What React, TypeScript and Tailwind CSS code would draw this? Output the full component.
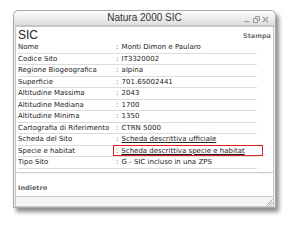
import React from "react";

const rows: { label: string; value: string; link?: boolean; boxed?: boolean }[] = [
  { label: "Nome", value: "Monti Dimon e Paularo" },
  { label: "Codice Sito", value: "IT3320002" },
  { label: "Regione Biogeografica", value: "alpina" },
  { label: "Superficie", value: "701.65002441" },
  { label: "Altitudine Massima", value: "2043" },
  { label: "Altitudine Mediana", value: "1700" },
  { label: "Altitudine Minima", value: "1350" },
  { label: "Cartografia di Riferimento", value: "CTRN 5000" },
  { label: "Scheda del Sito", value: "Scheda descrittiva ufficiale", link: true },
  { label: "Specie e habitat", value: "Scheda descrittiva specie e habitat", link: true, boxed: true },
  { label: "Tipo Sito", value: "G - SIC incluso in una ZPS" },
];

function WindowTools() {
  return (
    <div className="absolute right-[6px] top-[5px] flex items-center gap-[2px]">
      <svg width="7" height="7" viewBox="0 0 7 7">
        <rect x="0.5" y="5" width="5" height="1.2" fill="#9a9a9a" />
      </svg>
      <svg width="7" height="7" viewBox="0 0 7 7" fill="none" stroke="#9a9a9a" strokeWidth="1">
        <rect x="0.5" y="2.5" width="4" height="4" />
        <path d="M2.5 2.5V0.5h4v4h-2" />
      </svg>
      <svg width="7" height="7" viewBox="0 0 7 7" stroke="#9a9a9a" strokeWidth="1.2">
        <path d="M0.8 0.8l5.4 5.4M6.2 0.8L0.8 6.2" />
      </svg>
    </div>
  );
}

export default function App() {
  return (
    <div className="w-[290px] h-[226px] bg-white pl-[13px] pt-[10px]">
      <div
        className="w-[263px] h-[198px] flex flex-col border border-[#a8a8a8] rounded-t-[5px] bg-[#efefef] shadow-[3px_4px_4px_rgba(0,0,0,0.45)]"
        style={{ fontFamily: '"DejaVu Sans", Verdana, sans-serif' }}
      >
        {/* Title bar */}
        <div className="relative h-[15px] shrink-0 rounded-t-[5px] bg-gradient-to-b from-[#fdfdfd] to-[#dedede] border-b border-[#c4c4c4] flex items-center justify-center">
          <span
            className="text-[10px] leading-none text-[#333]"
            style={{ fontFamily: '"Liberation Sans", Arial, sans-serif' }}
          >
            Natura 2000 SIC
          </span>
          <WindowTools />
        </div>

        {/* Body */}
        <div className="flex-1 mx-[1px] border border-[#c8c8c8] bg-white flex flex-col">
          <div className="flex items-start justify-between pl-[2px] pr-[2px] pt-[1px]">
            <span
              className="text-[12px] leading-[14px] text-[#222]"
              style={{ fontFamily: '"Liberation Sans", Arial, sans-serif' }}
            >
              SIC
            </span>
            <span className="text-[6.5px] leading-[10px] mt-[3px] font-bold text-[#777]">Stampa</span>
          </div>

          <div className="ml-[2px] w-[239px] text-[7px] text-[#222]">
            {rows.map((r) => (
              <div key={r.label} className="h-[11.5px] flex items-center border-b border-[#dcdcdc]">
                <span className="w-[98px] shrink-0 whitespace-nowrap">{r.label}</span>
                {r.boxed ? (
                  <span className="whitespace-nowrap border-[1.5px] border-[#e02020] h-[11px] w-[150px] shrink-0 flex items-center pl-[2px] -ml-[3px]">
                    : <span className="underline ml-[3px]">{r.value}</span>
                  </span>
                ) : (
                  <span className="whitespace-nowrap">
                    : {r.link ? <span className="underline ml-[1px]">{r.value}</span> : <span className="ml-[1px]">{r.value}</span>}
                  </span>
                )}
              </div>
            ))}
          </div>

          <div className="mt-[3px] h-[2px] border-t border-[#cfcfcf] bg-[#f2f2f2]" />
          <div className="px-[2px] pt-[6px] leading-[10px]">
            <span className="text-[6.5px] font-bold text-[#666]">Indietro</span>
          </div>
          <div className="flex-1" />
          <div className="h-[10px] border-t border-[#cfcfcf] bg-[#f4f4f4] relative">
            <svg className="absolute right-0 bottom-0" width="8" height="8" viewBox="0 0 8 8" stroke="#a0a0a0" strokeWidth="1">
              <path d="M7.5 1.5L1.5 7.5M7.5 4L4 7.5M7.5 6.5L6.5 7.5" />
            </svg>
          </div>
        </div>
      </div>
    </div>
  );
}
